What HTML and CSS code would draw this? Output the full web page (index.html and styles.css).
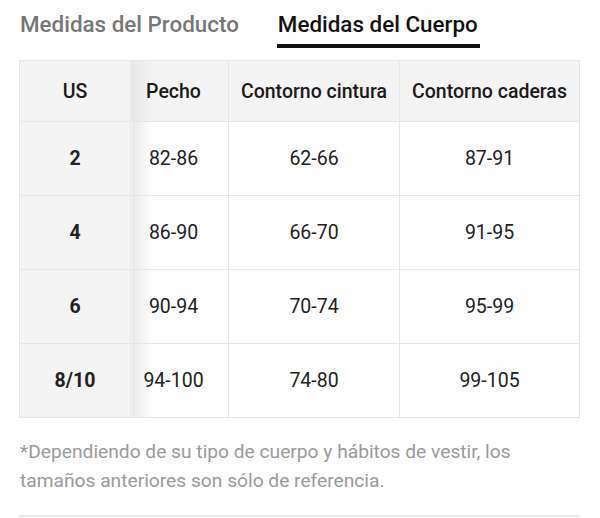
FILE: index.html
```html
<!DOCTYPE html>
<html lang="es">
<head>
<meta charset="utf-8">
<link rel="stylesheet" href="styles.css">
</head>
<body>
<div class="page">
  <div class="tabs">
    <div class="tab">Medidas del Producto</div>
    <div class="tab active">Medidas del Cuerpo</div>
  </div>
  <table class="sizes">
    <thead>
      <tr><th>US</th><th>Pecho</th><th>Contorno cintura</th><th>Contorno caderas</th></tr>
    </thead>
    <tbody>
      <tr><td>2</td><td>82-86</td><td>62-66</td><td>87-91</td></tr>
      <tr><td>4</td><td>86-90</td><td>66-70</td><td>91-95</td></tr>
      <tr><td>6</td><td>90-94</td><td>70-74</td><td>95-99</td></tr>
      <tr><td>8/10</td><td>94-100</td><td>74-80</td><td>99-105</td></tr>
    </tbody>
  </table>
  <p class="note">*Dependiendo de su tipo de cuerpo y hábitos de vestir, los tamaños anteriores son sólo de referencia.</p>
  <div class="rule"></div>
</div>
</body>
</html>
```
FILE: styles.css
```css
html, body { margin: 0; padding: 0; background: #fff; }
body { font-family: Roboto, "Liberation Sans", sans-serif; color: #222; }
.page { padding: 0 20px 0 19px; }
.tabs { display: flex; gap: 38px; padding-top: 8px; height: 52px; box-sizing: border-box; }
.tab { font-size: 22.4px; font-weight: 500; color: #767676; line-height: 32px; height: 40px; box-sizing: border-box; padding-left: 1px; }
.tab.active { color: #111; border-bottom: 4px solid #111; padding: 0 2px 0 1px; height: 40px; }
.sizes { border-collapse: collapse; width: 561px; margin-top: 8px; table-layout: fixed; }
.sizes th, .sizes td { border: 1px solid #e6e6e6; text-align: center; padding: 0; }
.sizes th { height: 60px; background: #f4f4f4; font-size: 19.5px; font-weight: 500; color: #1a1a1a; }
.sizes td { height: 73px; font-size: 19.5px; color: #222; }
.sizes th:nth-child(1), .sizes td:nth-child(1) { width: 110px; }
.sizes th:nth-child(2) { width: 85px; }
.sizes th:nth-child(3) { width: 170px; }
.sizes th:nth-child(2), .sizes td:nth-child(2) { padding-right: 12px; }
.sizes td:nth-child(1) { background: #f4f4f4; font-weight: 700; }
.sizes td:nth-child(2) { background: linear-gradient(to right, #e9e9e9, #fff 22px); }
.sizes th:nth-child(2) { background: linear-gradient(to right, #e6e6e6, #f4f4f4 22px); }
.note { margin: 19px 0 0 1px; font-size: 19.2px; line-height: 29px; color: #9a9a9a; }
.rule { margin-top: 20px; height: 2px; background: #ececec; }
```
